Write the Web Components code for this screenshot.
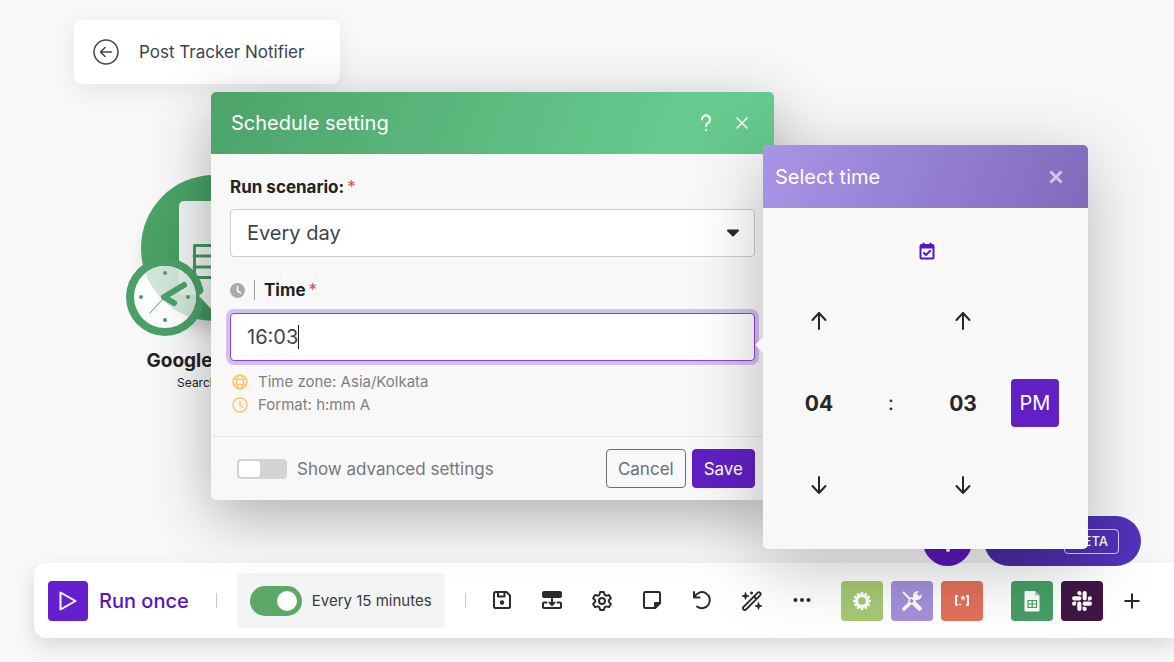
<!DOCTYPE html>
<html lang="en">
<head>
<meta charset="utf-8">
<meta name="viewport" content="width=device-width, initial-scale=1">
<title>Post Tracker Notifier</title>
<style>
    body {
        margin: 0;
        background: #f8f8f8;
        color: #2b2b2e;
        font-family: Inter, "Liberation Sans", sans-serif;
    }
</style>
</head>
<body>
<scenario-page>
    <scenario-title slot="title">Post Tracker Notifier</scenario-title>
    <module-node slot="canvas">
        Google Sheets
        <span slot="action">Search Rows</span>
    </module-node>
    <scenario-toolbar slot="toolbar"></scenario-toolbar>
    <assistant-buttons slot="canvas"></assistant-buttons>
    <schedule-dialog slot="canvas"></schedule-dialog>
    <time-picker slot="canvas"></time-picker>
</scenario-page>

<script>
const base = `
    :host, * { box-sizing: border-box; }
    button, input, select { font: inherit; color: inherit; margin: 0; }
    button { border: none; background: none; padding: 0; cursor: pointer; }
    svg { display: block; fill: none; stroke: currentColor; stroke-width: 2; stroke-linecap: round; stroke-linejoin: round; }
    h2 { margin: 0; font-size: 20px; font-weight: 400; line-height: 24px; }
`;

class BaseElement extends HTMLElement {
    constructor() {
        super();
        this.shadowDOM = this.attachShadow({mode: "open"});
    }

    connectedCallback() {
        this.shadowDOM.innerHTML = `<style>${base}</style>${this.render()}`;
    }
}

class ScenarioPage extends BaseElement {
    render() {
        return `
        <style>
        :host {
            display: flex;
            flex-direction: column;
            justify-content: space-between;
            position: relative;
            min-height: 100vh;
            padding: 20px 0 24px;
            overflow: hidden;
        }
        header {
            padding-left: 74px;
        }
        footer {
            padding-left: 34px;
        }
        </style>
        <header><slot name="title"></slot></header>
        <footer><slot name="toolbar"></slot></footer>
        <slot name="canvas"></slot>
        `;
    }
}

class ScenarioTitle extends BaseElement {
    render() {
        return `
        <style>
        :host {
            display: inline-flex;
            align-items: center;
            gap: 20px;
            height: 64px;
            padding: 0 36px 0 19px;
            border-radius: 8px;
            background: #fff;
            box-shadow: 0 6px 24px rgba(0, 0, 0, .08);
            color: #3c4450;
            font-size: 17px;
        }
        </style>
        <button aria-label="Back">
            <svg width="26" height="26" viewBox="0 0 26 26" style="stroke-width:1.5">
                <circle cx="13" cy="13" r="12"/>
                <path d="M18.5 13H7.5M12 8.5L7.5 13l4.5 4.5"/>
            </svg>
        </button>
        <span><slot></slot></span>
        `;
    }
}

class ModuleNode extends BaseElement {
    render() {
        return `
        <style>
        :host {
            display: flex;
            flex-direction: column;
            align-items: center;
            position: absolute;
            left: 124px;
            top: 170px;
            width: 180px;
            color: #222;
        }
        svg { stroke: none; }
        .name {
            margin-top: 6px;
            font-size: 19px;
            font-weight: 700;
            line-height: 26px;
            white-space: nowrap;
        }
        .action {
            font-size: 12px;
            line-height: 18px;
        }
        </style>
        <svg width="180" height="172" viewBox="124 170 180 172" style="overflow:visible">
            <defs>
                <linearGradient id="green" x1="0" y1="0" x2="1" y2="1">
                    <stop offset="0" stop-color="#4ea76c"/><stop offset="1" stop-color="#3c9058"/>
                </linearGradient>
                <filter id="soft" x="-30%" y="-30%" width="160%" height="160%"><feGaussianBlur stdDeviation="9"/></filter>
                <clipPath id="face"><circle cx="165" cy="297" r="31"/></clipPath>
            </defs>
            <circle cx="214" cy="262" r="68" fill="#000" opacity=".18" filter="url(#soft)"/>
            <circle cx="214" cy="248" r="73" fill="url(#green)"/>
            <path d="M184 201h46l20 20v74h-66a5 5 0 0 1-5-5v-84a5 5 0 0 1 5-5z" fill="#f2f4f3"/>
            <path d="M194.500 245.500h40v32h-40zM194 256h40M194 267h40M214 245v32" fill="none" stroke="#43975f" stroke-width="3"/>
            <circle cx="165" cy="297" r="39" fill="#4aa168"/>
            <path d="M199 296l14-14v29z" fill="#eceeed"/>
            <circle cx="165" cy="297" r="31" fill="#fff"/>
            <g clip-path="url(#face)">
                <circle cx="214" cy="248" r="73" fill="#cfe6d8"/>
                <path d="M179 260h30v35h-30z" fill="#e3efe7"/>
            </g>
            <g fill="#4aa168">
                <circle cx="165" cy="273" r="2"/><circle cx="188" cy="297" r="2"/>
                <circle cx="165" cy="320" r="2"/><circle cx="141" cy="297" r="2"/>
            </g>
            <path d="M184 285l-20 12 10 6" fill="none" stroke="#4aa168" stroke-width="6" stroke-linecap="round" stroke-linejoin="round"/>
            <path d="M163 299l-13 14" stroke="#4aa168" stroke-width="1"/>
        </svg>
        <div class="name"><slot></slot></div>
        <div class="action"><slot name="action"></slot></div>
        `;
    }
}

class ScheduleDialog extends BaseElement {
    render() {
        return `
        <style>
        :host {
            display: block;
            position: absolute;
            left: 211px;
            top: 92px;
            width: 563px;
            border-radius: 5px;
            background: #f8f8f8;
            box-shadow: 0 16px 60px rgba(0, 0, 0, .3);
        }
        header {
            display: flex;
            align-items: center;
            height: 62px;
            padding: 0 24px 0 20px;
            border-radius: 5px 5px 0 0;
            background: linear-gradient(110deg, #4da36a, #66c98d 80%);
            color: #fff;
        }
        h2 { flex: 1; }
        header button { margin-left: 20px; }
        form {
            padding: 20px 19px;
        }
        label {
            font-size: 17px;
            font-weight: 700;
            line-height: 26px;
            color: #222;
        }
        .required {
            margin-left: 3px;
            color: #e5484d;
            font-weight: 400;
        }
        .select {
            display: flex;
            align-items: center;
            margin: 9px 0 20px;
        }
        select {
            appearance: none;
            flex: 1;
            height: 48px;
            padding: 0 16px;
            border: 1px solid #ccc;
            border-radius: 4px;
            background: #fff;
            color: #3c4450;
            font-size: 20px;
        }
        .select svg {
            margin-left: -30px;
            margin-right: 14px;
            pointer-events: none;
        }
        .time-label {
            display: flex;
            align-items: center;
            gap: 9px;
        }
        .bar {
            width: 1px;
            height: 20px;
            background: #999;
        }
        .time {
            display: flex;
            align-items: center;
            height: 48px;
            margin-top: 10px;
            padding: 0 16px;
            border: 1px solid #8a3fe8;
            border-radius: 4px;
            background: #fff;
            box-shadow: 0 0 0 4px #d2c1ec;
            color: #3c4450;
        }
        .time input {
            field-sizing: content;
            border: none;
            outline: none;
            padding: 0;
            background: none;
            font-size: 20px;
            caret-color: transparent;
        }
        .caret {
            width: 1px;
            height: 24px;
            background: #222;
        }
        ul {
            margin: 9px 0 0;
            padding: 0 2px;
            list-style: none;
            color: #808080;
            font-size: 15px;
            line-height: 23px;
        }
        li {
            display: flex;
            align-items: center;
            gap: 10px;
        }
        li svg { color: #f8c865; stroke-width: 1.5; }
        footer {
            display: flex;
            align-items: center;
            gap: 6px;
            height: 64px;
            padding: 0 19px 0 26px;
            border-top: 1px solid #e8e8e8;
            font-size: 17px;
        }
        .advanced {
            display: flex;
            align-items: center;
            flex: 1;
            gap: 10px;
            color: #777;
            font-weight: 400;
        }
        .advanced input {
            appearance: none;
            display: flex;
            width: 50px;
            height: 20px;
            padding: 2px;
            border-radius: 4px;
            background: #d4d4d4;
        }
        .advanced input::before {
            content: "";
            width: 21px;
            border-radius: 3px;
            background: #fff;
        }
        footer button {
            height: 39px;
            padding: 0 11px;
            border: 1px solid #66707a;
            border-radius: 4px;
            color: #68707a;
        }
        footer .save {
            border-color: #611fc4;
            background: #611fc4;
            color: #fff;
        }
        </style>
        <header>
            <h2>Schedule setting</h2>
            <button aria-label="Help">
                <svg width="16" height="18" viewBox="0 0 16 18"><path d="M4 5.500a4 4 0 1 1 6.500 3C9 9.600 8 10 8 12"/><path d="M8 16v.1" stroke-width="2.500"/></svg>
            </button>
            <button aria-label="Close">
                <svg width="16" height="16" viewBox="0 0 16 16" style="stroke-width:1.5"><path d="M3 3l10 10M13 3L3 13"/></svg>
            </button>
        </header>
        <form>
            <label for="run">Run scenario:<span class="required">*</span></label>
            <div class="select">
                <select id="run"><option>Every day</option></select>
                <svg width="16" height="10" viewBox="0 0 16 10"><path d="M3 2.500h10L8 7.500z" fill="currentColor"/></svg>
            </div>
            <div class="time-label">
                <svg width="15" height="15" viewBox="0 0 15 15" style="stroke:none"><circle cx="7.500" cy="7.500" r="7.500" fill="#aaa"/><path d="M7.500 3.500v4.500l3 1.800" stroke="#fff" stroke-width="1.500"/></svg>
                <span class="bar"></span>
                <label for="time">Time<span class="required">*</span></label>
            </div>
            <div class="time"><input id="time" type="text" value="16:03"><span class="caret"></span></div>
            <ul>
                <li>
                    <svg width="16" height="16" viewBox="0 0 16 16"><circle cx="8" cy="8" r="7"/><ellipse cx="8" cy="8" rx="3.500" ry="7"/><path d="M1.500 5.500h13M1.500 10.500h13"/></svg>
                    Time zone: Asia/Kolkata
                </li>
                <li>
                    <svg width="16" height="16" viewBox="0 0 16 16"><circle cx="8" cy="8" r="7"/><path d="M8 4v4.500l3 2"/></svg>
                    Format: h:mm A
                </li>
            </ul>
        </form>
        <footer>
            <label class="advanced"><input type="checkbox" role="switch">Show advanced settings</label>
            <button>Cancel</button>
            <button class="save">Save</button>
        </footer>
        `;
    }
}

class TimePicker extends BaseElement {
    render() {
        const arrow = (label, d) => `
            <button aria-label="${label}">
                <svg width="18" height="20" viewBox="0 0 18 20"><path d="${d}"/></svg>
            </button>`;
        const up = "M9 18V2M2.500 9L9 2l6.500 7";
        const down = "M9 2v16M2.500 11L9 18l6.500-7";
        return `
        <style>
        :host {
            display: block;
            position: absolute;
            left: 763px;
            top: 145px;
            width: 325px;
            padding-bottom: 23px;
            border-radius: 5px;
            background: #f8f8f8;
            box-shadow: 0 16px 70px rgba(0, 0, 0, .26);
        }
        /* notch that points at the time field */
        :host::before {
            content: "";
            position: absolute;
            left: -8px;
            top: 192px;
            border: 8px solid transparent;
            border-left: none;
            border-right-color: #f8f8f8;
        }
        header {
            display: flex;
            align-items: center;
            justify-content: space-between;
            height: 63px;
            padding: 0 24px 0 12px;
            border-radius: 5px 5px 0 0;
            background: linear-gradient(110deg, #a895e5, #806bbb);
            color: #fff;
        }
        header button { color: #cfc6ec; }
        .now {
            display: flex;
            justify-content: center;
            align-items: center;
            height: 72px;
            padding: 14px 0 0 2px;
            color: #5a14c4;
        }
        .grid {
            display: grid;
            grid-template-columns: repeat(4, 1fr);
            grid-auto-rows: 82px;
            place-items: center;
            padding: 0 17px 0 20px;
            color: #262626;
            font-size: 20px;
        }
        b { font-size: 21px; font-weight: 700; }
        .pm {
            width: 48px;
            height: 48px;
            border-radius: 4px;
            background: #611fc4;
            color: #fff;
        }
        </style>
        <header>
            <h2>Select time</h2>
            <button aria-label="Close">
                <svg width="16" height="16" viewBox="0 0 16 16" style="stroke-width:3;stroke-linecap:butt"><path d="M2.500 2.500l11 11M13.500 2.500l-11 11"/></svg>
            </button>
        </header>
        <div class="now">
            <button aria-label="Now">
                <svg width="16" height="18" viewBox="0 0 16 18"><rect x="1.500" y="3" width="13" height="13.500" rx="1"/><path d="M1.500 5h13" stroke-width="3" stroke-linecap="butt"/><path d="M4.500 1.500v2M11.500 1.500v2M5 11l2 2 4-4"/></svg>
            </button>
        </div>
        <div class="grid">
            ${arrow("Hour up", up)}<span></span>${arrow("Minute up", up)}<span></span>
            <b>04</b><span>:</span><b>03</b><button class="pm">PM</button>
            ${arrow("Hour down", down)}<span></span>${arrow("Minute down", down)}
        </div>
        `;
    }
}

class AssistantButtons extends BaseElement {
    render() {
        return `
        <style>
        :host {
            display: flex;
            align-items: center;
            gap: 12px;
            position: absolute;
            right: 33px;
            bottom: 96px;
            color: #fff;
        }
        .help {
            display: flex;
            justify-content: center;
            align-items: center;
            width: 49px;
            height: 49px;
            border-radius: 50%;
            background: #5c18b8;
        }
        .ai {
            display: flex;
            align-items: center;
            justify-content: flex-end;
            width: 157px;
            height: 50px;
            padding-right: 22px;
            border-radius: 25px;
            background: linear-gradient(90deg, #4a2ba0, #5332bd);
        }
        .badge {
            padding: 0 10px;
            border: 1px solid #d8d0f0;
            border-radius: 4px;
            font-size: 13px;
            font-weight: 500;
            line-height: 23px;
        }
        </style>
        <button class="help" aria-label="Help">
            <svg width="24" height="28" viewBox="0 0 24 28" style="stroke-width:4"><path d="M6 7a6 6 0 1 1 9 5c-2 1-3 2-3 4M12 23v.1"/></svg>
        </button>
        <button class="ai"><span class="badge">BETA</span></button>
        `;
    }
}

class ScenarioToolbar extends BaseElement {
    render() {
        let teeth = "";
        for (let i = 0; i < 12; i++) {
            teeth += `<rect x="8.500" y="0" width="3" height="4" rx=".8" transform="rotate(${i * 30} 10 10)"/>`;
        }
        return `
        <style>
        :host {
            display: flex;
            align-items: center;
            height: 75px;
            padding-left: 14px;
            border-radius: 12px 0 0 12px;
            background: #fff;
            box-shadow: 0 8px 20px rgba(0, 0, 0, .13);
        }
        .run {
            display: flex;
            align-items: center;
            gap: 11px;
            color: #5a14c0;
            font-size: 20px;
            font-weight: 500;
            white-space: nowrap;
        }
        .play, .tile {
            display: flex;
            align-items: center;
            justify-content: center;
            height: 40px;
            border-radius: 4px;
            color: #fff;
        }
        .play {
            width: 40px;
            background: #651fcc;
        }
        .divider {
            flex: none;
            width: 1px;
            height: 15px;
            background: #c8c8d0;
        }
        .run + .divider { margin-left: 27px; }
        .schedule {
            display: flex;
            align-items: center;
            gap: 10px;
            height: 55px;
            margin: 0 20px;
            padding: 0 13px;
            border-radius: 4px;
            background: #f3f4f4;
            color: #3a3a3a;
            font-size: 15px;
            white-space: nowrap;
        }
        .schedule input {
            appearance: none;
            display: flex;
            justify-content: flex-end;
            width: 52px;
            height: 30px;
            padding: 5px;
            border-radius: 15px;
            background: #5ca868;
        }
        .schedule input::before {
            content: "";
            width: 20px;
            border-radius: 50%;
            background: #fff;
        }
        .tools {
            display: flex;
            margin: 0 14px 0 11px;
        }
        .tools button {
            display: flex;
            justify-content: center;
            width: 50px;
        }
        .apps {
            display: flex;
            gap: 8px;
            margin-right: 28px;
        }
        .apps:last-of-type { margin-right: 20px; }
        .tile { width: 42px; }
        .tile svg { stroke: none; fill: #fff; }
        </style>
        <button class="run">
            <span class="play"><svg width="20" height="22" viewBox="0 0 20 22"><path d="M2.500 2.500v17L17.500 11z"/></svg></span>
            Run once
        </button>
        <span class="divider"></span>
        <label class="schedule"><input type="checkbox" role="switch" checked>Every 15 minutes</label>
        <span class="divider"></span>
        <div class="tools">
            <button aria-label="Save">
                <svg width="20" height="20" viewBox="0 0 20 20"><path d="M3.500 2h11L18 5.500v11a1.500 1.500 0 0 1-1.500 1.500h-13A1.500 1.500 0 0 1 2 16.500v-13A1.500 1.500 0 0 1 3.500 2zM6 2v4.500h6.500V2"/><circle cx="10" cy="12.500" r="1.200" fill="currentColor"/></svg>
            </button>
            <button aria-label="Auto-align">
                <svg width="22" height="20" viewBox="0 0 22 20"><rect x="2" y="2" width="18" height="5" rx="1" fill="currentColor"/><path d="M5.500 12.500H3a1 1 0 0 0-1 1V17a1 1 0 0 0 1 1h16a1 1 0 0 0 1-1v-3.500a1 1 0 0 0-1-1h-2.500M11 9v6M8.500 12.500L11 15l2.500-2.500"/></svg>
            </button>
            <button aria-label="Settings">
                <svg width="22" height="22" viewBox="0 0 22 22"><path d="M9.200 2h3.600l.8 2.800 1.600.9 2.800-.7 1.900 3.200-2.100 2v1.700l2.100 2-1.900 3.200-2.800-.7-1.600.9-.8 2.700H9.200l-.8-2.700-1.600-.9-2.800.7-1.900-3.200 2.100-2v-1.700l-2.100-2L4 5l2.800.7 1.600-.9z"/><circle cx="11" cy="11" r="3"/></svg>
            </button>
            <button aria-label="Notes">
                <svg width="20" height="20" viewBox="0 0 20 20"><path d="M3.500 2h13A1.500 1.500 0 0 1 18 3.500V13l-5 5H3.500A1.500 1.500 0 0 1 2 16.500v-13A1.500 1.500 0 0 1 3.500 2z"/><path d="M13 18v-5h5z" fill="currentColor"/></svg>
            </button>
            <button aria-label="Undo">
                <svg width="20" height="20" viewBox="0 0 20 20"><path d="M2 2v5.500h5.500M2.500 7A8 8 0 1 1 5 16.500"/></svg>
            </button>
            <button aria-label="Magic wand">
                <svg width="22" height="22" viewBox="0 0 22 22"><path d="M2.500 17L16.500 2.800a1.700 1.700 0 0 1 2.600 2.500L5 19.500A1.700 1.700 0 0 1 2.500 17zM13 6.500L15.500 9" style="stroke-width:1.8"/><path d="M4.500 2.500l.9 2.600 2.600.9-2.600.9-.9 2.600-.9-2.600L1 6l2.600-.9zM17.500 12.500l.9 2.600 2.600.9-2.600.9-.9 2.600-.9-2.600L14 16l2.600-.9z" fill="currentColor" style="stroke-width:.8"/><circle cx="10.500" cy="3" r="1" fill="currentColor" style="stroke-width:1"/></svg>
            </button>
            <button aria-label="More">
                <svg width="18" height="20" viewBox="0 0 18 20" style="fill:currentColor;stroke:none"><circle cx="2.500" cy="10" r="2"/><circle cx="9" cy="10" r="2"/><circle cx="15.500" cy="10" r="2"/></svg>
            </button>
        </div>
        <div class="apps">
            <button class="tile" aria-label="Flow control" style="background:#a5c973">
                <svg width="18" height="18" viewBox="0 0 20 20">${teeth}<circle cx="10" cy="10" r="6" fill="none" stroke="#fff" stroke-width="3.500"/></svg>
            </button>
            <button class="tile" aria-label="Tools" style="background:#a290dd">
                <svg width="20" height="20" viewBox="0 0 20 20"><g stroke="#fff" fill="none"><path d="M1.500 1.500l6 6" stroke-width="2"/><path d="M12.500 12.500l5 5" stroke-width="4.500"/><path d="M7.500 12.500L2 18M12 8l3-3" stroke-width="3.500"/><circle cx="10" cy="10" r="3" stroke-width="1.500"/></g><path d="M17 .5l-3 3 .5 2 2 .5 3-3c1 3-1 6-4 6-3.500 0-5-2-4.500-5 .5-2.500 3-4.500 6-3.500z"/></svg>
            </button>
            <button class="tile" aria-label="Text parser" style="background:#e3705b">
                <svg width="16" height="14" viewBox="0 0 16 14"><path d="M4 2H2v9h2M12 2h2v9h-2" fill="none" stroke="#fff" stroke-width="2" stroke-linecap="butt"/><circle cx="6" cy="10.500" r="1"/><path d="M9 2v4M7.300 3l3.400 2M10.700 3L7.300 5" stroke="#fff" stroke-width="1"/></svg>
            </button>
        </div>
        <div class="apps">
            <button class="tile" aria-label="Google Sheets" style="background:#479e65">
                <svg width="16" height="22" viewBox="0 0 16 22"><path d="M1.500 1H11l4.500 4.500v15a1 1 0 0 1-1 1h-13a1 1 0 0 1-1-1V2a1 1 0 0 1 1-1z"/><path d="M11 1v4.500h4.500z" fill="#9fd0b0"/><path d="M4 10.500h8.500v7H4zM4 14h8.500M8.200 10.500v7" fill="none" stroke="#479e65" stroke-width="1.200"/></svg>
            </button>
            <button class="tile" aria-label="Slack" style="background:#3f1644">
                <svg width="20" height="20" viewBox="0 0 24 24"><path d="M5 15.200a2.500 2.500 0 1 1-2.500-2.500H5zm1.300 0a2.500 2.500 0 0 1 5 0v6.300a2.500 2.500 0 0 1-5 0zM8.800 5a2.500 2.500 0 1 1 2.500-2.500V5zm0 1.300a2.500 2.500 0 0 1 0 5H2.500a2.500 2.500 0 0 1 0-5zM19 8.800a2.500 2.500 0 1 1 2.500 2.500H19zm-1.300 0a2.500 2.500 0 0 1-5 0V2.500a2.500 2.500 0 0 1 5 0zM15.200 19a2.500 2.500 0 1 1-2.500 2.500V19zm0-1.300a2.500 2.500 0 0 1 0-5h6.300a2.500 2.500 0 0 1 0 5z"/></svg>
            </button>
        </div>
        <button aria-label="Add app">
            <svg width="18" height="18" viewBox="0 0 18 18"><path d="M9 1.500v15M1.500 9h15" stroke-linecap="butt"/></svg>
        </button>
        `;
    }
}

customElements.define('scenario-page', ScenarioPage);
customElements.define('scenario-title', ScenarioTitle);
customElements.define('module-node', ModuleNode);
customElements.define('schedule-dialog', ScheduleDialog);
customElements.define('time-picker', TimePicker);
customElements.define('assistant-buttons', AssistantButtons);
customElements.define('scenario-toolbar', ScenarioToolbar);
</script>
</body>
</html>
